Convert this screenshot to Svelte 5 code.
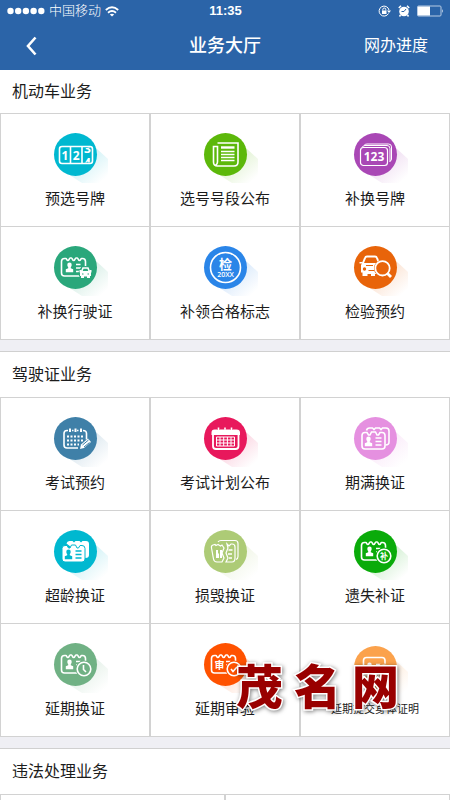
<script lang="ts">
  interface Service {
    icon: string;
    label: string;
    color: string;
    small?: boolean;
  }

  const vehicle: Service[] = [
    { icon: 'pick', label: '预选号牌', color: '#00b8d0' },
    { icon: 'news', label: '选号号段公布', color: '#5cb80a' },
    { icon: 'plates', label: '补换号牌', color: '#a947b5' },
    { icon: 'licence-car', label: '补换行驶证', color: '#2aa77b' },
    { icon: 'inspect', label: '补领合格标志', color: '#2a85e8' },
    { icon: 'car-search', label: '检验预约', color: '#e8640a' },
  ];

  const driver: Service[] = [
    { icon: 'calendar-pen', label: '考试预约', color: '#3f80a8' },
    { icon: 'calendar', label: '考试计划公布', color: '#e8185c' },
    { icon: 'cards', label: '期满换证', color: '#e590e0' },
    { icon: 'cards-solid', label: '超龄换证', color: '#00b8d0' },
    { icon: 'torn', label: '损毁换证', color: '#adcb76' },
    { icon: 'lost', label: '遗失补证', color: '#0aab0a' },
    { icon: 'clock', label: '延期换证', color: '#70b184' },
    { icon: 'review', label: '延期审验', color: '#ff5200' },
    { icon: 'body', label: '延期提交身体证明', color: '#fba24c', small: true },
  ];
</script>

{#snippet person()}
  <path
    class="solid"
    d="M15.5 17.5a2.2 2.2 0 0 1 2.2 2.3c0 1.2-.5 1.8-.9 2.4v1l2.4 1v3h-7.4v-3l2.4-1v-1c-.4-.6-.9-1.2-.9-2.4a2.2 2.2 0 0 1 2.2-2.3z"
  />
{/snippet}

{#snippet notched()}
  <path
    d="M10.5 12.5h1.4c.8 0 .8 2 2 2s1.4-2.5 2.2-2.5h1.400c.8 0 1 2.500 2.200 2.500s1.400-2.500 2.200-2.500h1.400c.8 0 1 2.500 2.200 2.500s1.200-2 2-2h1q3 0 3 3v11.500q0 3-3 3h-18q-3 0-3-3v-11.500q0-3 3-3z"
  />
{/snippet}

{#snippet glyph(s: Service)}
  {#if s.icon === 'pick'}
    <rect x="5.5" y="13.5" width="33" height="17" rx="2.5" />
    <path d="M16.500 13.500v17M28 13.500v17" />
    <text x="11" y="26.500" font-size="12">1</text>
    <text x="22.300" y="26.500" font-size="12">2</text>
    <clipPath id="reel"><rect x="29" y="14.500" width="9" height="15" /></clipPath>
    <g clip-path="url(#reel)">
      <text x="33.400" y="20" font-size="12">3</text>
      <text x="33.400" y="34" font-size="12">4</text>
    </g>
  {:else if s.icon === 'news'}
    <path d="M13.5 10h20.5v19q0 4-4 4h-16.5q-4 0-4-4V13.5h4v15.500q0 2-2 3.500" />
    <path d="M17 14.500h13.500" stroke-width="2.400" />
    <path d="M17 18.500h13.500M17 21.500h13.500M17 24.500h13.500M17 27.500h13.500" />
  {:else if s.icon === 'plates'}
    <path d="M10 12.500q1-1.500 3-1.500h21.500q3 0 3 3v12q0 2-2 2.500" stroke-width="1" />
    <path d="M8 14.500q1-2 3-2h22q3 0 3 3v13" stroke-width="1" />
    <rect x="6.500" y="14.500" width="27" height="18" rx="3" stroke-width="1.200" />
    <text x="20" y="28" font-size="12">123</text>
  {:else if s.icon === 'inspect'}
    <circle cx="21.5" cy="21.5" r="15" />
    <text x="21.5" y="22.5" font-size="13">检</text>
    <text class="thin" x="21.5" y="31" font-size="7">20XX</text>
  {:else if s.icon === 'car-search'}
    <path d="M9 17l2-5q.5-1.500 2-1.500h8q1.500 0 2 1.500l1.500 4" stroke-width="2" />
    <path
      class="solid"
      d="M5.500 16h3l.5 1h14v11h-2v2h-4v-2h-3.500v2h-5v-3.500h-1.500v-7.500l1-1.500h-2.500z"
    />
    <circle class="knock" cx="10.500" cy="23" r="1.700" />
    <path class="gap" d="M12 19.500h7M14.500 24.500h6" />
    <circle class="knock" cx="28.500" cy="22.300" r="8.500" />
    <circle cx="28.500" cy="22.300" r="7.200" stroke-width="1.800" />
    <path d="M33.500 27.500l3.500 3.500" stroke-width="2.800" />
  {:else if s.icon === 'calendar-pen'}
    <path d="M14 13.500h-1q-3 0-3 3v11.500q0 3 3 3h11M18 13.500h1.500M23 13.500h1.500M29 13.500q3.500 0 3.500 3v6" />
    <path d="M16 11.500v3.500M21.500 11.500v3.500M27 11.500v3.500" stroke-width="2" />
    <path d="M13 19.500h17M13 23.500h17M13 27.500h12" stroke-width="2" stroke-dasharray="2 1.500" />
    <path class="solid" d="M26 32l1-4.500 7-6 3 3.500-7 6z" />
    <path class="gap" d="M28.500 28l6-5M30 30l5.500-4.500" />
  {:else if s.icon === 'calendar'}
    <rect x="9" y="14" width="25.500" height="18" rx="3" stroke-width="1.800" />
    <path class="solid" d="M7.500 18v-2.500q0-3 3-3h3v2h2v-2h4.500v2h2v-2h4.500v2h2v-2h4q3.500 0 3.500 3v2.500z" />
    <path d="M14.500 10.500v3.500M21 10.500v3.500M27.500 10.500v3.500" />
    <path
      d="M12.500 20h18v9h-18zM12.500 23h18M12.500 26h18M16 20v9M19.700 20v9M23.400 20v9M27 20v9"
      stroke-width="1"
    />
  {:else if s.icon === 'cards' || s.icon === 'cards-solid'}
    <path
      class:solid={s.icon === 'cards-solid'}
      d="M12.500 13.500q.5-2.500 3-2.500h3l1.500 1.500 1.500-1.500h4l1.500 1.500 1.500-1.500h3.500q3 0 3 3v11q0 3-3.500 3"
    />
    <path
      class={s.icon === 'cards' ? 'knock-fill' : 'solid edge-line'}
      d="M11 15.500h2l1.500 2.500h1.500l1.500-3h4l1.500 3h1.500l1.500-2.500h2q3 0 3 3v10.500q0 3-3 3h-17q-3 0-3-3v-10.500q0-3 3-3z"
    />
    <g class:inverse={s.icon === 'cards-solid'} transform="translate(-1 2)">
      {@render person()}
      <path d="M22.500 19h6M22.500 22.500h6M22.500 26h6" />
    </g>
  {:else if s.icon === 'torn'}
    <path d="M14 12q1-1.500 3-1.500h14q3 0 3 3v13q0 2.500-2 3" stroke-width="1.200" />
    <path
      d="M14 14.500l-2 1-1-1-2 .5q-2 .5-1.500 3l2 11q.5 3 3.500 3h5l2-4-2-5 2-5-2-3-1.500 1z"
      stroke-width="1.200"
    />
    <path d="M23 14l2 2 2-2h1q3 0 3 3v11q0 4-3 4h-6l2-4-2-5 2-5z" stroke-width="1.200" />
    <path class="solid" d="M12 20h2v3l1 1v4h-3zM16 20h2v8h-2z" />
    <path d="M24.500 20h4M24 24h4M25 28h3" />
  {:else}
    {#if s.icon === 'body'}
      <rect x="9.500" y="11.500" width="21.500" height="18" rx="3" />
    {:else}
      {@render notched()}
    {/if}
    {#if s.icon === 'review'}
      <text x="15.500" y="25.500" font-size="10">审</text>
    {:else}
      <g transform="translate(0 -1)">{@render person()}</g>
    {/if}
    <path d="M22 18.500h4.500M22 22h5M22 25.500h4" />

    {#if s.icon === 'licence-car'}
      <circle class="knock" cx="31.500" cy="27" r="7" />
      <path d="M27.500 26l1.500-4h5l1.500 4" />
      <path class="solid" d="M25.500 24h2v1h8v-1h2v2l-.5 1v3h-1v2h-3v-1.500h-3v1.500h-3v-2h-1v-3l-.5-1z" />
      <path class="gap" d="M28 28h1.500M33.500 28h1.500" />
    {:else}
      <circle class="knock" cx="30" cy="26" r="8.500" />
      <circle cx="30" cy="26" r="6.800" />
      {#if s.icon === 'lost'}
        <text x="30" y="29" font-size="8">补</text>
      {:else if s.icon === 'clock'}
        <path d="M29.500 22v4.500l2.500 2.500" />
      {:else}
        <path d="M27 26l2 2.500 4-4.500" />
      {/if}
    {/if}
  {/if}
{/snippet}

{#snippet tiles(items: Service[])}
  <div class="grid">
    {#each items as s (s.icon)}
      <button type="button" class="tile">
        <svg class="icon" viewBox="0 0 43 43" color={s.color} aria-hidden="true">
          <linearGradient id="shade-{s.icon}" x1="0.2" y1="0.2" x2="0.9" y2="0.9">
            <stop offset="0.2" stop-color="currentColor" stop-opacity="0.18" />
            <stop offset="1" stop-color="currentColor" stop-opacity="0" />
          </linearGradient>
          <path fill="url(#shade-{s.icon})" d="M42 15l12 11v24H28L14 41z" />
          <circle cx="21.5" cy="21.5" r="21.5" fill="currentColor" />
          <g class="glyph">{@render glyph(s)}</g>
        </svg>
        <span class="label" class:small={s.small}>{s.label}</span>
      </button>
    {/each}
  </div>
{/snippet}

<div class="app">
  <header>
    <div class="status">
      <div class="carrier">
        <svg width="38" height="8" viewBox="0 0 38 8" fill="#fff" aria-hidden="true">
          {#each [0, 1, 2, 3, 4] as i}
            <circle cx={3.5 + i * 7.7} cy="4" r="3.2" />
          {/each}
        </svg>
        <span>中国移动</span>
        <svg width="14" height="11" viewBox="0 0 14 11" fill="none" stroke="#fff" stroke-width="1.8" aria-hidden="true">
          <path d="M.8 4q6.2-5.500 12.400 0M3 6.800q4-3.500 8 0" />
          <path d="M7 10.500L4.800 8.500q2.200-1.500 4.400 0z" fill="#fff" stroke="none" />
        </svg>
      </div>
      <time>11:35</time>
      <div class="indicators">
        <svg width="13" height="12" viewBox="0 0 13 12" fill="none" stroke="#fff" aria-hidden="true">
          <path d="M10.500 8.500a5 5 0 1 1 .5-3.500" />
          <path d="M9 5.500h4l-2 2.500z" fill="#fff" stroke="none" />
          <rect x="4" y="5.500" width="4.500" height="3.500" fill="#fff" stroke="none" />
          <path d="M4.800 5.500v-1q0-1.500 1.500-1.500t1.500 1.500v1" />
        </svg>
        <svg width="12" height="12" viewBox="0 0 12 12" aria-hidden="true">
          <circle cx="6" cy="6.500" r="4.800" fill="#fff" />
          <path d="M.8 3L3 .8M11.200 3L9 .8M2.500 10L1.500 11.500M9.500 10l1 1.500" stroke="#fff" stroke-width="1.500" />
          <path d="M3.500 6.500h2.500l2-2.500" fill="none" stroke="#2b64a8" />
        </svg>
        <svg width="27" height="12" viewBox="0 0 27 12" aria-hidden="true">
          <rect x="0.500" y="1" width="23.500" height="10" rx="1" fill="none" stroke="#b9cce4" />
          <rect x="1" y="1.500" width="12" height="9" fill="#fff" />
          <path d="M25 4q1.500 2 0 4z" fill="#fff" />
        </svg>
      </div>
    </div>
    <nav>
      <button type="button" class="back" aria-label="返回">
        <svg width="11" height="20" viewBox="0 0 11 20" fill="none" stroke="#fff" stroke-width="2.600" aria-hidden="true">
          <path d="M9.500 1.500L2 10l7.500 8.500" />
        </svg>
      </button>
      <h1>业务大厅</h1>
      <a class="progress" href="#progress">网办进度</a>
    </nav>
  </header>

  <main>
    <section class="first">
      <h2>机动车业务</h2>
      {@render tiles(vehicle)}
    </section>
    <section>
      <h2>驾驶证业务</h2>
      {@render tiles(driver)}
      <div class="mark"><span>茂</span><span>名</span><span>网</span></div>
    </section>
    <section>
      <h2>违法处理业务</h2>
      <div class="grid two">
        <div class="tile"></div>
        <div class="tile"></div>
      </div>
    </section>
  </main>
</div>

<style>
  :global(body) {
    margin: 0;
  }
  .app {
    display: flex;
    flex-direction: column;
    height: 100vh;
    overflow: hidden;
    background: #efeff4;
    color: #1c1c1c;
    font-family: "Liberation Sans", "Noto Sans CJK SC", sans-serif;
  }
  button {
    border: 0;
    padding: 0;
    background: none;
    color: inherit;
    font: inherit;
    cursor: pointer;
  }
  h1,
  h2 {
    margin: 0;
    font-weight: 400;
  }

  header {
    flex: none;
    background: #2b64a8;
    color: #fff;
  }
  .status,
  nav {
    display: grid;
    grid-template-columns: 1fr auto 1fr;
    align-items: center;
  }
  .status {
    height: 22px;
    padding: 0 6px 0 7px;
    font-size: 13px;
    line-height: 22px;
  }
  .carrier,
  .indicators {
    display: flex;
    align-items: center;
    gap: 4px;
    font-weight: 300;
  }
  .indicators {
    justify-content: flex-end;
    gap: 7px;
  }
  time {
    font-weight: 700;
  }
  nav {
    height: 48px;
    padding: 0 22px;
  }
  .back {
    display: flex;
    justify-self: start;
    padding: 4px;
  }
  h1 {
    font-size: 18px;
    font-weight: 500;
    line-height: 24px;
  }
  .progress {
    justify-self: end;
    color: #fff;
    font-size: 16px;
    line-height: 24px;
    text-decoration: none;
  }

  main {
    flex: 1;
    min-height: 0;
    overflow: hidden;
  }
  section {
    position: relative;
    margin-bottom: 11px;
    border-top: 1px solid #d0d0d0;
    background: #fff;
  }
  section.first {
    border-top: 0;
  }
  h2 {
    padding-left: 12px;
    font-size: 16px;
    line-height: 45px;
  }
  .first h2 {
    line-height: 43px;
  }
  .grid {
    display: grid;
    grid-template-columns: repeat(3, 1fr);
    gap: 1px 2px;
    padding: 1px;
    background: #d2d2d2;
  }
  .grid.two {
    grid-template-columns: repeat(2, 1fr);
  }
  .tile {
    display: flex;
    flex-direction: column;
    align-items: center;
    justify-content: center;
    gap: 12px;
    box-sizing: border-box;
    min-height: 112px;
    padding-top: 3px;
    background: #fff;
  }
  .label {
    font-size: 15px;
    line-height: 22px;
    white-space: nowrap;
  }
  .label.small {
    font-size: 11px;
    line-height: 16px;
  }

  .icon {
    width: 43px;
    height: 43px;
    overflow: visible;
  }
  .glyph {
    fill: none;
    stroke: #fff;
    stroke-width: 1.6;
  }
  .glyph text {
    fill: #fff;
    stroke: none;
    font-family: "Open Sans", "Noto Sans CJK SC", sans-serif;
    font-weight: 700;
    text-anchor: middle;
  }
  .glyph .thin {
    font-weight: 600;
  }
  .glyph .solid {
    fill: #fff;
    stroke: none;
  }
  .glyph .knock {
    fill: currentColor;
    stroke: none;
  }
  .glyph .knock-fill {
    fill: currentColor;
  }
  .glyph .edge-line {
    stroke: currentColor;
    stroke-width: 1;
  }
  .glyph .gap {
    stroke: currentColor;
    stroke-width: 1;
  }
  .glyph .inverse {
    stroke: currentColor;
  }
  .glyph .inverse :global(.solid) {
    fill: currentColor;
  }

  /* site mark stamped over the last row of tiles */
  .mark {
    position: absolute;
    right: 51px;
    bottom: 26px;
    display: flex;
    gap: 11px;
    color: #900;
    font-family: "Noto Sans CJK SC", sans-serif;
    font-size: 47px;
    font-weight: 900;
    line-height: 54px;
    -webkit-text-stroke: 3px #fff;
    paint-order: stroke fill;
    filter: drop-shadow(1px 1px 2px rgba(0, 0, 0, 0.5));
    pointer-events: none;
  }
</style>
